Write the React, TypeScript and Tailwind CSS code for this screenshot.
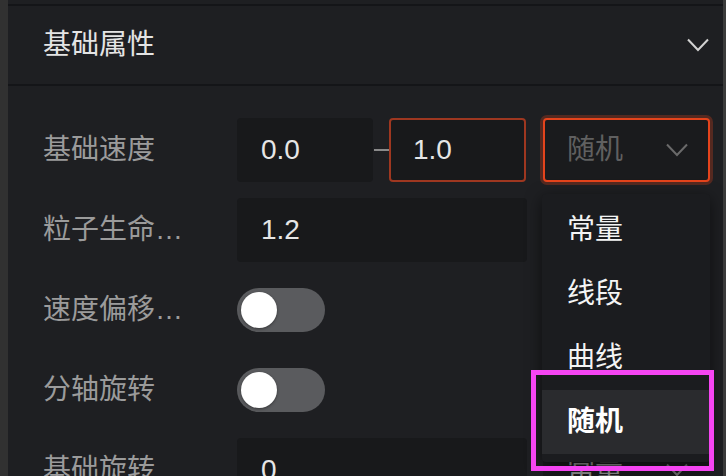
import type { ReactNode } from 'react';

const font = "font-['Liberation_Sans','Noto_Sans_CJK_SC',sans-serif]";

function Chevron({ className }: { className?: string }) {
  return (
    <svg width="22" height="14" viewBox="0 0 22 14" fill="none" className={className}>
      <polyline points="1,1.5 11,12 21,1.5" stroke="currentColor" strokeWidth="2" />
    </svg>
  );
}

function Row({ label, children }: { label: string; children: ReactNode }) {
  return (
    <div className="flex h-[64px] items-center">
      <div className="w-[194px] shrink-0 text-[28px] leading-none text-[#9b9b9b]">{label}</div>
      {children}
    </div>
  );
}

function Toggle() {
  return (
    <div className="flex h-[44px] w-[88px] items-center rounded-full bg-[#5a5b5e] px-[4px]">
      <div className="h-[36px] w-[36px] rounded-full bg-white shadow-[0_1px_3px_rgba(0,0,0,0.4)]" />
    </div>
  );
}

const options = ['常量', '线段', '曲线', '随机'];

export default function App() {
  return (
    <div className={`relative flex h-[476px] w-[726px] overflow-hidden bg-[#1e1f22] ${font}`}>
      <div className="w-[8px] shrink-0 bg-[#313131]" />

      <div className="flex flex-1 flex-col">
        <div className="h-[4px] shrink-0" />
        <div className="h-[2px] shrink-0 bg-[#141518]" />
        <div className="flex h-[78px] shrink-0 items-center justify-between pl-[35px] pr-[14px]">
          <span className="text-[28px] leading-none text-[#e4e4e4]">基础属性</span>
          <Chevron className="text-[#d2d2d2]" />
        </div>
        <div className="h-[2px] shrink-0 bg-[#141518]" />

        <div className="flex flex-col gap-[16px] pl-[35px] pt-[32px]">
          <Row label="基础速度">
            <div className="flex h-[64px] w-[290px] items-center">
              <div className="flex h-full w-[136px] items-center rounded-[4px] bg-[#18191b] pl-[24px] text-[28px] text-[#e6e6e6]">
                0.0
              </div>
              <div className="flex w-[16px] justify-center">
                <div className="h-[2px] w-[15px] bg-[#8a8a8a]" />
              </div>
              <div className="flex h-full w-[137px] items-center rounded-[4px] border-2 border-[#9e3720] bg-[#18191b] pl-[22px] text-[28px] text-[#e6e6e6]">
                1.0
              </div>
            </div>
            <div className="relative ml-[16px] h-[64px] w-[167px]">
              <div className="flex h-full w-full items-center justify-between rounded-[4px] border-2 border-[#e5441c] bg-[#1a1b1d] pl-[22px] pr-[20px] shadow-[0_0_0_3px_rgba(229,68,28,0.28)]">
                <span className="text-[28px] leading-none text-[#606060]">随机</span>
                <Chevron className="text-[#6a6a6a]" />
              </div>
              <div className="absolute left-[-1px] top-[76px] z-10 w-[168px] rounded-[4px] bg-[#1b1c1f] pb-[8px] pt-[4px] shadow-[0_4px_16px_rgba(0,0,0,0.55)]">
                {options.map((o) => (
                  <div
                    key={o}
                    className={`flex h-[64px] items-center pl-[25px] text-[28px] leading-none ${
                      o === '随机' ? 'bg-[#2a2b2e] font-bold text-white' : 'text-[#f4f4f4]'
                    }`}
                  >
                    {o}
                  </div>
                ))}
              </div>
            </div>
          </Row>

          <Row label="粒子生命…">
            <div className="flex h-[64px] w-[290px] items-center rounded-[4px] bg-[#18191b] pl-[24px] text-[28px] text-[#e6e6e6]">
              1.2
            </div>
            <div className="ml-[16px] flex h-[64px] w-[167px] items-center justify-between rounded-[4px] bg-[#18191b] pl-[24px] pr-[22px]">
              <span className="text-[28px] leading-none text-[#8a8a8a]">随机</span>
              <Chevron className="text-[#6a6a6a]" />
            </div>
          </Row>

          <Row label="速度偏移…">
            <Toggle />
          </Row>

          <Row label="分轴旋转">
            <Toggle />
          </Row>

          <Row label="基础旋转">
            <div className="flex h-[64px] w-[290px] items-center rounded-[4px] bg-[#18191b] pl-[24px] text-[28px] text-[#e6e6e6]">
              0
            </div>
            <div className="ml-[16px] flex h-[64px] w-[167px] items-center justify-between rounded-[4px] bg-[#18191b] pl-[24px] pr-[22px]">
              <span className="text-[28px] leading-none text-[#8a8a8a]">常量</span>
              <Chevron className="text-[#6a6a6a]" />
            </div>
          </Row>
        </div>
      </div>

      <div className="w-[3px] shrink-0 bg-[#3b3b3b]" />

      <div className="pointer-events-none absolute left-[531px] top-[370px] z-20 h-[101px] w-[183px] border-[5px] border-[#f545f2]" />
    </div>
  );
}
